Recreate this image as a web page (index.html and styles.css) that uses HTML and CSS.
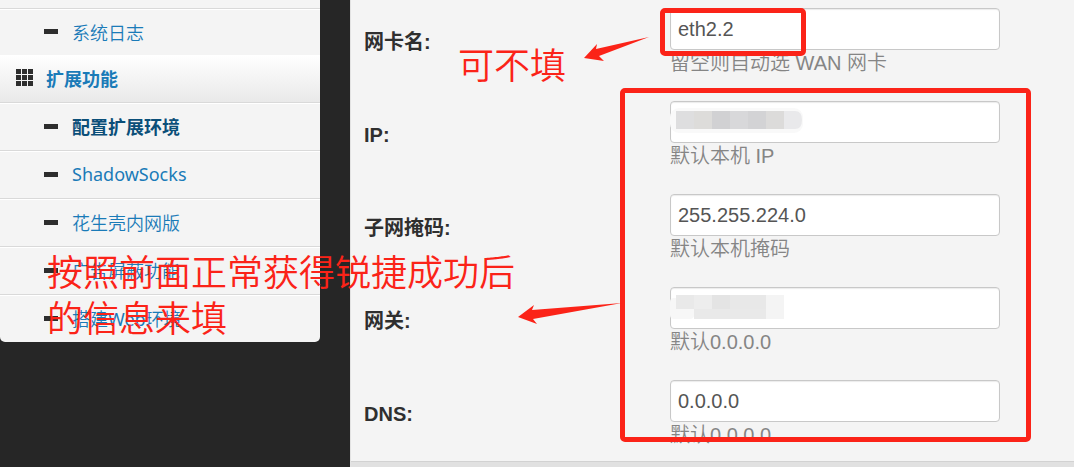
FILE: index.html
```html
<!DOCTYPE html>
<html lang="zh-CN">
<head>
<meta charset="utf-8">
<meta name="viewport" content="width=device-width, initial-scale=1">
<title>配置扩展环境</title>
<link rel="stylesheet" href="styles.css">
</head>
<body>
<div class="page">
  <nav class="sidebar">
    <ul class="menu">
      <li class="item first"><a href="#"><i class="dash"></i>系统日志</a></li>
      <li class="group"><a href="#"><svg class="grid-icon" viewBox="0 0 17 17" aria-hidden="true"><path d="M0 0h5v5H0zM6 0h5v5H6zM12 0h5v5h-5zM0 6h5v5H0zM6 6h5v5H6zM12 6h5v5h-5zM0 12h5v5H0zM6 12h5v5H6zM12 12h5v5h-5z"/></svg>扩展功能</a></li>
      <li class="item active"><a href="#"><i class="dash"></i>配置扩展环境</a></li>
      <li class="item"><a href="#"><i class="dash"></i><span class="latin">ShadowSocks</span></a></li>
      <li class="item"><a href="#"><i class="dash"></i>花生壳内网版</a></li>
      <li class="item"><a href="#"><i class="dash"></i>广告屏蔽功能</a></li>
      <li class="item"><a href="#"><i class="dash"></i><span>搭建<span class="latin">Web</span>环境</span></a></li>
    </ul>
  </nav>
  <main class="content">
    <form class="form">
      <div class="row">
        <label for="nic">网卡名:</label>
        <div class="field"><input id="nic" type="text" value="eth2.2"><p>留空则自动选 WAN 网卡</p></div>
      </div>
      <div class="row">
        <label for="ip">IP:</label>
        <div class="field"><input id="ip" type="text">
          <svg class="mosaic" width="134" height="42" viewBox="0 0 134 42" aria-hidden="true">
            <rect x="0" y="7" width="133" height="25" rx="9" fill="#f9f9f9"/>
            <path d="M6 10h18v18H6z" fill="#dededf"/><path d="M24 10h18v18H24z" fill="#dddcda"/><path d="M42 10h18v18H42z" fill="#d1d1d3"/><path d="M60 10h18v18H60z" fill="#d8d8da"/><path d="M78 10h18v18H78z" fill="#d3d3d5"/><path d="M96 10h18v18H96z" fill="#dcdbda"/><path d="M114 10h11q7 0 7 9t-7 9h-11z" fill="#e9e9eb"/>
          </svg>
          <p>默认本机 IP</p></div>
      </div>
      <div class="row">
        <label for="mask">子网掩码:</label>
        <div class="field"><input id="mask" type="text" value="255.255.224.0"><p>默认本机掩码</p></div>
      </div>
      <div class="row">
        <label for="gateway">网关:</label>
        <div class="field"><input id="gateway" type="text">
          <svg class="mosaic" width="134" height="42" viewBox="0 0 134 42" aria-hidden="true">
            <rect x="0" y="11" width="24" height="21" rx="4" fill="#f7f7f7"/>
            <path d="M6 8h18v14H6z" fill="#e9e9e9"/><path d="M24 8h18v14H24z" fill="#ededed"/><path d="M42 8h18v14H42z" fill="#e4e4e4"/><path d="M60 8h36v14H60z" fill="#e8e8e8"/><path d="M96 8h18v24H96z" fill="#f4f4f4"/><path d="M24 22h72v10H24z" fill="#e9e9e9"/>
          </svg>
          <p>默认0.0.0.0</p></div>
      </div>
      <div class="row">
        <label for="dns">DNS:</label>
        <div class="field"><input id="dns" type="text" value="0.0.0.0"><p>默认0.0.0.0</p></div>
      </div>
    </form>
    <div class="footer"></div>
  </main>
  <div class="mark box-nic"></div>
  <div class="mark box-rest"></div>
  <p class="note note-skip">可不填</p>
  <p class="note note-fill">按照前面正常获得锐捷成功后<br>的信息来填</p>
  <svg class="arrow arrow-top" width="66" height="26" viewBox="0 0 66 26" aria-hidden="true"><path d="M0 22L13 8L12 13L65 1L15 20L20 25Z"/></svg>
  <svg class="arrow arrow-bottom" width="104" height="24" viewBox="0 0 104 24" aria-hidden="true"><path d="M0 16L16 4L14 9L104 2L15 18L19 23Z"/></svg>
</div>
</body>
</html>
```
FILE: styles.css
```css
* { box-sizing: border-box; }
body {
  margin: 0;
  background: #262626;
  font-family: "Liberation Sans", "Noto Sans CJK SC", sans-serif;
}
p, ul { margin: 0; padding: 0; }
.page {
  position: relative;
  display: flex;
  gap: 30px;
  min-height: 100vh;
}
.sidebar { flex: 0 0 320px; }
.menu {
  list-style: none;
  padding-top: 8px;
  background: #f4f4f4;
  border-radius: 0 0 5px 5px;
  overflow: hidden;
  font: 350 18px "Noto Sans CJK SC", sans-serif;
}
.menu a {
  display: flex;
  align-items: center;
  height: 47px;
  padding-bottom: 2px;
  color: #1a7bb8;
  text-decoration: none;
}
.item { border-top: 1px solid #d9d9d9; }
.item a {
  gap: 14px;
  padding-left: 44px;
  border-top: 1px solid #fff;
}
.first a { height: 46px; }
.latin { font-family: "Noto Sans", sans-serif; font-weight: 400; }
.dash {
  width: 14px;
  height: 5px;
  background: #2d2d2d;
}
.group { background: linear-gradient(#fff, #e9e9e9); }
.group a {
  gap: 13px;
  padding-left: 16px;
  font-weight: 700;
}
.grid-icon { width: 17px; height: 17px; fill: #2d2d2d; }
.active a { color: #0b4f79; font-weight: 700; }
.content {
  flex: 1;
  min-width: 0;
  display: flex;
  flex-direction: column;
  background: #f4f4f4;
  border-left: 1px solid #e2e2e2;
}
.form {
  display: flex;
  flex-direction: column;
  gap: 25px;
  padding: 8px 13px 13px;
  font-size: 20px;
}
.row {
  display: grid;
  grid-template-columns: 306px minmax(0, 330px);
  align-items: center;
}
label { color: #2f2f2f; font-weight: 700; line-height: 26px; }
.field { position: relative; }
input {
  display: block;
  width: 100%;
  height: 42px;
  padding: 0 7px;
  border: 1px solid #c8c8c8;
  border-radius: 4px;
  background: #fff;
  box-shadow: inset 0 1px 1px #ececec;
  color: #555;
  font: 20px "Liberation Sans", sans-serif;
}
.field p { color: #858585; font-weight: 350; line-height: 26px; }
.mosaic { position: absolute; left: 0; top: 0; }
.footer { flex: 1; background: #e1e1e1; border-top: 1px solid #d2d2d2; }
.mark {
  position: absolute;
  border: 5px solid #fb2318;
  border-radius: 5px;
}
.box-nic { left: 660px; top: 8px; width: 146px; height: 48px; }
.box-rest { left: 620px; top: 88px; width: 411px; height: 354px; }
.note {
  position: absolute;
  color: #fb2318;
  font: 350 36px/46px "Noto Sans CJK SC", sans-serif;
  white-space: nowrap;
}
.note-skip { left: 458px; top: 40px; }
.note-fill { left: 47px; top: 247px; }
.arrow { position: absolute; fill: #fb2318; }
.arrow-top { left: 584px; top: 36px; }
.arrow-bottom { left: 518px; top: 301px; }
```
